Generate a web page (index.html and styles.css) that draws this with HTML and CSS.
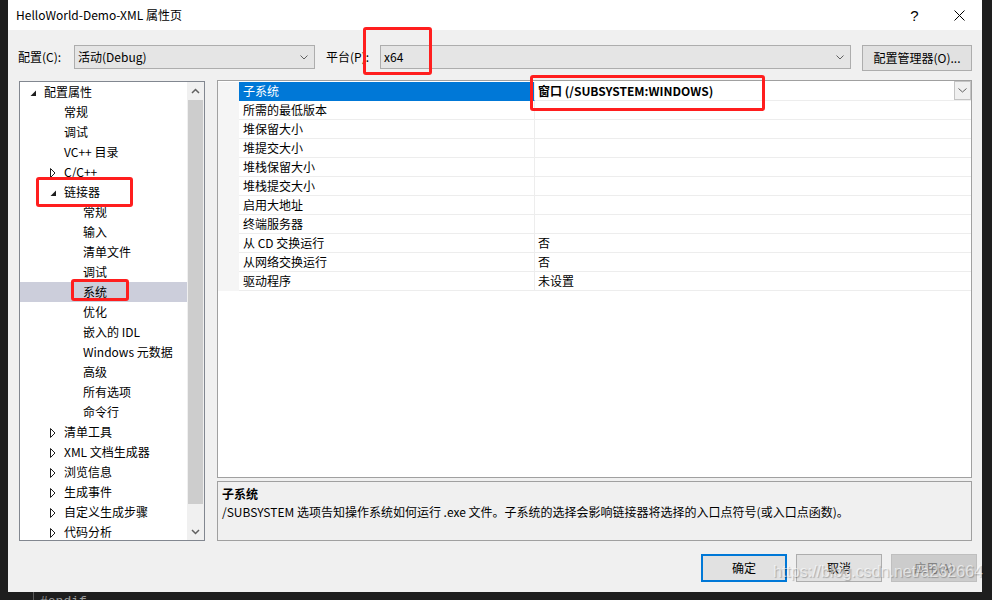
FILE: index.html
```html
<!DOCTYPE html>
<html lang="zh-CN">
<head>
    <meta charset="UTF-8">
    <meta name="viewport" content="width=device-width, initial-scale=1.0">
    <title>HelloWorld-Demo-XML 属性页</title>
    <link rel="stylesheet" href="styles.css">
</head>
<body>
<div class="screen">
    <div class="dialog">
        <div class="titlebar">
            <span class="title">HelloWorld-Demo-XML 属性页</span>
            <span class="tb-btn help">?</span>
            <span class="tb-btn close">
                <svg width="11" height="11" viewBox="0 0 11 11"><path d="M0.5 0.5 L10.5 10.5 M10.5 0.5 L0.5 10.5" stroke="#000" stroke-width="1" fill="none"/></svg>
            </span>
        </div>

        <div class="body">
            <div class="config-row">
                <label class="lbl lbl-config">配置(C):</label>
                <div class="combo combo-config">
                    <span>活动(Debug)</span>
                    <svg class="chev" width="8" height="5" viewBox="0 0 8 5"><path d="M0.5 0.5 L4 4 L7.5 0.5" stroke="#606060" fill="none"/></svg>
                </div>
                <label class="lbl lbl-platform">平台(P):</label>
                <div class="combo combo-platform">
                    <span>x64</span>
                    <svg class="chev" width="8" height="5" viewBox="0 0 8 5"><path d="M0.5 0.5 L4 4 L7.5 0.5" stroke="#606060" fill="none"/></svg>
                </div>
                <button class="btn btn-manager">配置管理器(O)...</button>
            </div>

            <div class="main">
                <div class="tree">
                    <div class="tree-list">
                        <div class="node lv0"><span class="tog"><svg width="7" height="7" viewBox="0 0 7 7"><polygon points="6,0.5 6,6 0.5,6" fill="#1e1e1e"/></svg></span>配置属性</div>
                        <div class="node lv1"><span class="tog"></span>常规</div>
                        <div class="node lv1"><span class="tog"></span>调试</div>
                        <div class="node lv1"><span class="tog"></span>VC++ 目录</div>
                        <div class="node lv1"><span class="tog"><svg width="6" height="10" viewBox="0 0 6 10"><polygon points="0.5,0.5 5,5 0.5,9.5" fill="#fff" stroke="#1e1e1e"/></svg></span>C/C++</div>
                        <div class="node lv1"><span class="tog"><svg width="7" height="7" viewBox="0 0 7 7"><polygon points="6,0.5 6,6 0.5,6" fill="#1e1e1e"/></svg></span>链接器</div>
                        <div class="node lv2">常规</div>
                        <div class="node lv2">输入</div>
                        <div class="node lv2">清单文件</div>
                        <div class="node lv2">调试</div>
                        <div class="node lv2 selected">系统</div>
                        <div class="node lv2">优化</div>
                        <div class="node lv2">嵌入的 IDL</div>
                        <div class="node lv2">Windows 元数据</div>
                        <div class="node lv2">高级</div>
                        <div class="node lv2">所有选项</div>
                        <div class="node lv2">命令行</div>
                        <div class="node lv1"><span class="tog"><svg width="6" height="10" viewBox="0 0 6 10"><polygon points="0.5,0.5 5,5 0.5,9.5" fill="#fff" stroke="#1e1e1e"/></svg></span>清单工具</div>
                        <div class="node lv1"><span class="tog"><svg width="6" height="10" viewBox="0 0 6 10"><polygon points="0.5,0.5 5,5 0.5,9.5" fill="#fff" stroke="#1e1e1e"/></svg></span>XML 文档生成器</div>
                        <div class="node lv1"><span class="tog"><svg width="6" height="10" viewBox="0 0 6 10"><polygon points="0.5,0.5 5,5 0.5,9.5" fill="#fff" stroke="#1e1e1e"/></svg></span>浏览信息</div>
                        <div class="node lv1"><span class="tog"><svg width="6" height="10" viewBox="0 0 6 10"><polygon points="0.5,0.5 5,5 0.5,9.5" fill="#fff" stroke="#1e1e1e"/></svg></span>生成事件</div>
                        <div class="node lv1"><span class="tog"><svg width="6" height="10" viewBox="0 0 6 10"><polygon points="0.5,0.5 5,5 0.5,9.5" fill="#fff" stroke="#1e1e1e"/></svg></span>自定义生成步骤</div>
                        <div class="node lv1"><span class="tog"><svg width="6" height="10" viewBox="0 0 6 10"><polygon points="0.5,0.5 5,5 0.5,9.5" fill="#fff" stroke="#1e1e1e"/></svg></span>代码分析</div>
                    </div>
                    <div class="vscroll">
                        <div class="arrow">
                            <svg width="9" height="6" viewBox="0 0 9 6"><path d="M1 5 L4.5 1.5 L8 5" stroke="#606060" stroke-width="1.5" fill="none"/></svg>
                        </div>
                        <div class="track"><div class="thumb"></div></div>
                        <div class="arrow">
                            <svg width="9" height="6" viewBox="0 0 9 6"><path d="M1 1 L4.5 4.5 L8 1" stroke="#606060" stroke-width="1.5" fill="none"/></svg>
                        </div>
                    </div>
                </div>

                <div class="right">
                    <div class="grid">
                        <div class="prop active">
                            <span class="gutter"></span>
                            <span class="name">子系统</span>
                            <span class="value">窗口 (/SUBSYSTEM:WINDOWS)
                                <span class="drop"><svg width="9" height="5" viewBox="0 0 9 5"><path d="M0.5 0.5 L4.5 4 L8.5 0.5" stroke="#606060" fill="none"/></svg></span>
                            </span>
                        </div>
                        <div class="prop"><span class="gutter"></span><span class="name">所需的最低版本</span><span class="value"></span></div>
                        <div class="prop"><span class="gutter"></span><span class="name">堆保留大小</span><span class="value"></span></div>
                        <div class="prop"><span class="gutter"></span><span class="name">堆提交大小</span><span class="value"></span></div>
                        <div class="prop"><span class="gutter"></span><span class="name">堆栈保留大小</span><span class="value"></span></div>
                        <div class="prop"><span class="gutter"></span><span class="name">堆栈提交大小</span><span class="value"></span></div>
                        <div class="prop"><span class="gutter"></span><span class="name">启用大地址</span><span class="value"></span></div>
                        <div class="prop"><span class="gutter"></span><span class="name">终端服务器</span><span class="value"></span></div>
                        <div class="prop"><span class="gutter"></span><span class="name">从 CD 交换运行</span><span class="value">否</span></div>
                        <div class="prop"><span class="gutter"></span><span class="name">从网络交换运行</span><span class="value">否</span></div>
                        <div class="prop"><span class="gutter"></span><span class="name">驱动程序</span><span class="value">未设置</span></div>
                    </div>
                    <div class="desc">
                        <div class="desc-title">子系统</div>
                        <div class="desc-text">/SUBSYSTEM 选项告知操作系统如何运行 .exe 文件。子系统的选择会影响链接器将选择的入口点符号(或入口点函数)。</div>
                    </div>
                </div>
            </div>

            <div class="actions">
                <button class="btn btn-action default">确定</button>
                <button class="btn btn-action">取消</button>
                <button class="btn btn-action disabled">应用(A)</button>
            </div>
        </div>
    </div>

    <div class="below"><span class="code">#endif</span></div>

    <!-- screenshot annotations -->
    <div class="mark mark-platform"></div>
    <div class="mark mark-subsystem"></div>
    <div class="mark mark-linker"></div>
    <div class="mark mark-system"></div>
    <div class="watermark">https://blog.csdn.net/a232664</div>
</div>
</body>
</html>
```

FILE: styles.css
```css
* {
    box-sizing: border-box;
}

body {
    margin: 0;
    background: #1e1e1e;
    font-family: "Noto Sans CJK SC", sans-serif;
    font-size: 12px;
    color: #000;
}

.screen {
    position: relative;
    width: 992px;
    height: 600px;
    overflow: hidden;
    background: #1e1e1e;
}

.dialog {
    margin-left: 8px;
    width: 974px;
    height: 592px;
    background: #f0f0f0;
}

/* title bar */
.titlebar {
    height: 30px;
    background: #fff;
    display: flex;
    align-items: center;
    padding-left: 8px;
}

.title {
    flex: 1;
    line-height: 30px;
}

.tb-btn {
    width: 45px;
    height: 30px;
    display: flex;
    align-items: center;
    justify-content: center;
}

.help {
    font-family: "Liberation Sans", sans-serif;
    font-size: 15px;
}

/* body */
.body {
    padding: 15px 10px 0 10px;
}

.config-row {
    display: flex;
    align-items: flex-start;
    height: 26px;
}

.lbl {
    line-height: 24px;
}

.lbl-config {
    width: 56px;
}

.lbl-platform {
    width: 54px;
    margin-left: 11px;
}

.combo {
    height: 24px;
    display: flex;
    align-items: center;
    justify-content: space-between;
    border: 1px solid #adadad;
    background: #e5e5e5;
    padding: 0 6px 0 3px;
    line-height: 22px;
}

.combo-config {
    width: 241px;
}

.combo-platform {
    width: 471px;
}

.btn {
    font-family: "Noto Sans CJK SC", sans-serif;
    font-size: 12px;
    color: #000;
    background: #e1e1e1;
    border: 1px solid #adadad;
    padding: 0;
    line-height: 1;
}

.btn-manager {
    margin-left: 11px;
    width: 110px;
    height: 26px;
}

/* main area */
.main {
    display: flex;
    margin-top: 9px;
    height: 461px;
}

.tree {
    margin: 1px 0 0 1px;
    width: 186px;
    height: 460px;
    border: 1px solid #828790;
    background: #fff;
    display: flex;
}

.tree-list {
    flex: 1;
    overflow: hidden;
}

.node {
    height: 20px;
    line-height: 20px;
    display: flex;
    align-items: center;
    white-space: nowrap;
}

.node.lv0 {
    padding-left: 10px;
}

.node.lv1 {
    padding-left: 30px;
}

.node.lv2 {
    padding-left: 63px;
}

.node.selected {
    background: #cccedb;
}

.tog {
    width: 14px;
    height: 20px;
    display: flex;
    align-items: center;
    flex-shrink: 0;
}

.tog svg {
    margin-top: 2px;
}

.vscroll {
    width: 17px;
    background: #f0f0f0;
    display: flex;
    flex-direction: column;
}

.arrow {
    height: 17px;
    display: flex;
    align-items: center;
    justify-content: center;
}

.track {
    flex: 1;
    padding: 1px 0 19px 0;
}

.thumb {
    height: 100%;
    margin: 0 1px;
    background: #cdcdcd;
}

.right {
    flex: 1;
    margin-left: 12px;
    display: flex;
    flex-direction: column;
}

/* property grid */
.grid {
    height: 398px;
    border: 1px solid #a0a0a0;
    padding-top: 1px;
    background: #fff;
}

.prop {
    display: flex;
    height: 19px;
    line-height: 18px;
}

.gutter {
    width: 21px;
    background: #f5f5f5;
}

.name {
    width: 296px;
    padding-left: 4px;
    border-right: 1px solid #ededed;
    border-bottom: 1px solid #ededed;
    white-space: nowrap;
}

.value {
    flex: 1;
    display: flex;
    justify-content: space-between;
    padding-left: 3px;
    border-bottom: 1px solid #ededed;
    white-space: nowrap;
}

.prop.active .name {
    background: #0078d7;
    color: #fff;
    border-bottom-color: #0078d7;
}

.prop.active .value {
    font-weight: bold;
}

.drop {
    width: 17px;
    height: 19px;
    margin-top: -1px;
    border: 1px solid #c4c4c4;
    background: #f0f0f0;
    display: flex;
    align-items: center;
    justify-content: center;
}

.desc {
    margin-top: 3px;
    height: 60px;
    border: 1px solid #a0a0a0;
    background: #f0f0f0;
    padding: 3px 4px 0 4px;
}

.desc-title {
    font-weight: bold;
    line-height: 18px;
}

.desc-text {
    line-height: 17px;
}

/* bottom buttons */
.actions {
    display: flex;
    justify-content: flex-end;
    gap: 9px;
    margin-top: 13px;
    margin-right: -5px;
}

.btn-action {
    width: 86px;
    height: 28px;
}

.btn-action.default {
    border: 2px solid #0078d7;
}

.btn-action.disabled {
    background: #cccccc;
    border-color: #bfbfbf;
    color: #838383;
}

/* editor peeking out below the dialog */
.below {
    height: 8px;
    margin-left: 33px;
    border-left: 1px solid #5a5a5a;
    padding-left: 6px;
    overflow: hidden;
}

.code {
    display: block;
    margin-top: 2px;
    font-family: "Liberation Mono", monospace;
    font-size: 13px;
    line-height: 16px;
    color: #9b9b9b;
}

/* red annotation boxes drawn over the screenshot */
.mark {
    position: absolute;
    border: 3px solid #ff1e1e;
    border-radius: 3px;
}

.mark-platform {
    left: 363px;
    top: 27px;
    width: 69px;
    height: 48px;
}

.mark-subsystem {
    left: 530px;
    top: 75px;
    width: 235px;
    height: 36px;
}

.mark-linker {
    left: 36px;
    top: 177px;
    width: 97px;
    height: 30px;
}

.mark-system {
    left: 71px;
    top: 279px;
    width: 58px;
    height: 22px;
}

.watermark {
    position: absolute;
    left: 773px;
    top: 562px;
    font-family: "Liberation Sans", sans-serif;
    font-size: 16px;
    line-height: 20px;
    color: rgba(255, 255, 255, 0.6);
    text-shadow: 1px 1px 1px rgba(0, 0, 0, 0.25);
    white-space: nowrap;
}
```
